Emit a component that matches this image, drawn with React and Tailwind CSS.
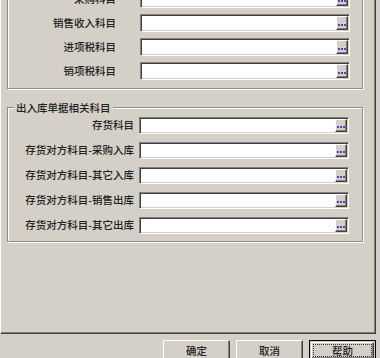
import React from "react";

function Ellipsis() {
  return (
    <div className="flex h-full w-[12px] items-center justify-center gap-[1px] border border-t-white border-l-white border-r-[#404040] border-b-[#404040] bg-[#d4d0c8] pt-[3px] shadow-[inset_-1px_-1px_0_#808080]">
      <span className="h-[2px] w-[2px] bg-[#4a4ab8]" />
      <span className="h-[2px] w-[2px] bg-[#4a4ab8]" />
      <span className="h-[2px] w-[2px] bg-[#4a4ab8]" />
    </div>
  );
}

function Field({ h }) {
  return (
    <div
      className={`flex w-[210px] border border-t-[#808080] border-l-[#808080] border-r-white border-b-white bg-white shadow-[inset_1px_1px_0_#404040,inset_-1px_-1px_0_#d4d0c8] p-[1px] ${h}`}
    >
      <div className="flex-1" />
      <Ellipsis />
    </div>
  );
}

function Row({ label, labelW, gap, h }) {
  return (
    <div className="flex items-center">
      <div className={`text-right whitespace-nowrap leading-none ${labelW}`}>{label}</div>
      <div className={gap}>
        <Field h={h} />
      </div>
    </div>
  );
}

export default function App() {
  const g1 = ["采购科目", "销售收入科目", "进项税科目", "销项税科目"];
  const g2 = [
    "存货科目",
    "存货对方科目-采购入库",
    "存货对方科目-其它入库",
    "存货对方科目-销售出库",
    "存货对方科目-其它出库",
  ];
  return (
    <div className="flex h-[358px] w-[380px] flex-col overflow-hidden bg-[#d4d0c8] font-['Noto_Sans_CJK_SC','Noto_Sans',sans-serif] text-[10.5px] font-medium text-[#222]">
      <div className="h-[334px] w-[376px] shrink-0 overflow-hidden border-l border-r border-b border-l-white border-r-[#404040] border-b-[#404040] shadow-[inset_-1px_-1px_0_#808080]">
        <div className="ml-[6px] mt-[-30px] flex w-[356px] flex-col gap-[6px] border border-[#8c8c8c] pt-[19px] pb-[8px] shadow-[inset_1px_1px_0_#fff,1px_1px_0_#fff]">
          {g1.map((l) => (
            <Row key={l} label={l} labelW="w-[108px]" gap="ml-[24px]" h="h-[18px]" />
          ))}
        </div>
        <div className="relative ml-[6px] mt-[18px] flex w-[356px] flex-col gap-[8px] border border-[#8c8c8c] pt-[9px] pb-[7px] shadow-[inset_1px_1px_0_#fff,1px_1px_0_#fff]">
          <div className="absolute left-[6px] top-[-7px] bg-[#d4d0c8] px-[2px] leading-[13px]">
            出入库单据相关科目
          </div>
          {g2.map((l) => (
            <Row key={l} label={l} labelW="w-[126px]" gap="ml-[5px]" h="h-[17px]" />
          ))}
        </div>
      </div>
      <div className="mt-[6px] flex justify-end gap-[6px] pr-[4px]">
        <div className="flex h-[21px] w-[67px] items-center justify-center border border-t-white border-l-white border-r-[#404040] border-b-[#404040] shadow-[inset_-1px_-1px_0_#808080]">
          确定
        </div>
        <div className="flex h-[21px] w-[67px] items-center justify-center border border-t-white border-l-white border-r-[#404040] border-b-[#404040] shadow-[inset_-1px_-1px_0_#808080]">
          取消
        </div>
        <div className="flex h-[21px] w-[67px] border border-black p-[1px]">
          <div className="flex flex-1 border border-t-white border-l-white border-r-[#404040] border-b-[#404040] p-[1px] shadow-[inset_-1px_-1px_0_#808080]">
            <div className="flex flex-1 items-center justify-center border border-dotted border-[#333]">
              帮助
            </div>
          </div>
        </div>
      </div>
    </div>
  );
}
